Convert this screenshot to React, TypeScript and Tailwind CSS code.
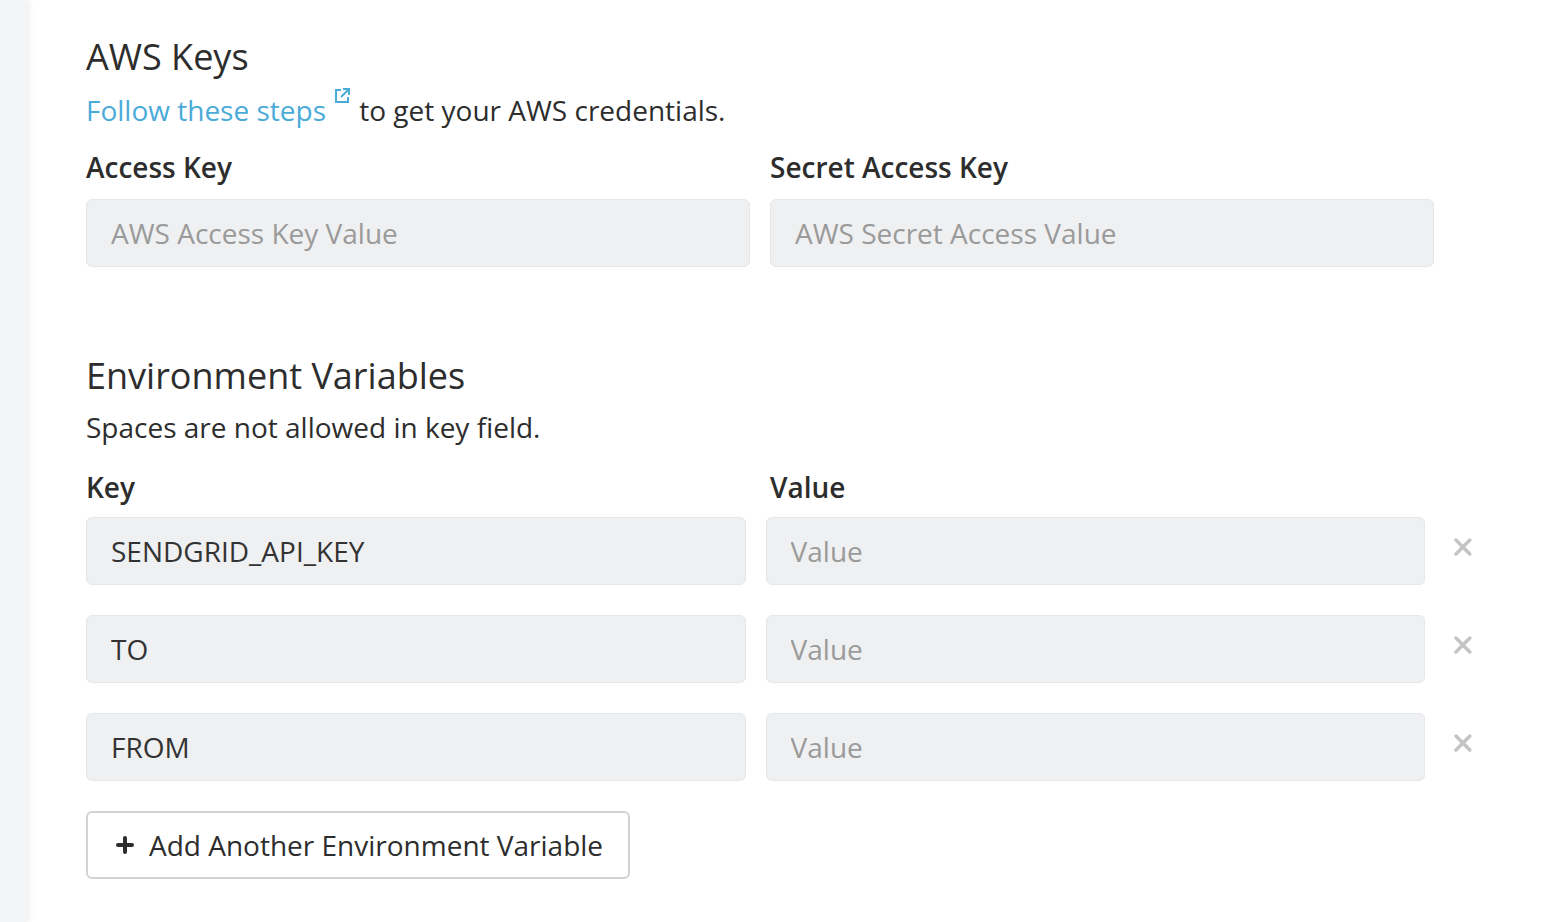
import { Plus, X } from 'lucide-react';

const rows = ['SENDGRID_API_KEY', 'TO', 'FROM'];

function ExtIcon() {
  return (
    <svg width="20" height="20" viewBox="0 0 20 20" fill="none" stroke="#4aabd8" strokeWidth="2" className="inline-block align-top -mt-1 ml-1.5">
      <path d="M9 4H4v12h12v-5" />
      <path d="M11 3h6v6M17 3l-8 8" />
    </svg>
  );
}

export default function App() {
  return (
    <div className="flex min-h-[922px] bg-white text-[#2d2d2d]" style={{ fontFamily: '"Open Sans", sans-serif' }}>
      <div className="w-[27px] shrink-0 bg-[#f4f5f7] shadow-[2px_0_6px_rgba(0,0,0,0.08)]" />
      <div className="pl-[59px] pt-[30px] w-[1450px]">
        {/* AWS keys */}
        <h2 className="text-[36px] leading-[54px]">AWS Keys</h2>
        <p className="text-[28px] leading-[40px] mt-[6px]">
          <span className="text-[#4aabd8]">Follow these steps</span>
          <ExtIcon /> to get your AWS credentials.
        </p>
        <div className="grid grid-cols-[664px_664px] gap-x-5 mt-[17px]">
          <label className="text-[28px] font-semibold leading-[40px]">Access Key</label>
          <label className="text-[28px] font-semibold leading-[40px]">Secret Access Key</label>
          <input placeholder="AWS Access Key Value" className="mt-[12px] h-[68px] rounded-md bg-[#eff0f1] border border-[#e6e7e9] px-6 text-[28px] placeholder:text-[#9a9a9a] outline-none" />
          <input placeholder="AWS Secret Access Value" className="mt-[12px] h-[68px] rounded-md bg-[#eff0f1] border border-[#e6e7e9] px-6 text-[28px] placeholder:text-[#9a9a9a] outline-none" />
        </div>

        {/* Environment variables */}
        <h2 className="text-[36px] leading-[54px] mt-[82px]">Environment Variables</h2>
        <p className="text-[28px] leading-[40px] mt-[4px]">Spaces are not allowed in key field.</p>
        <div className="grid grid-cols-[664px_664px] gap-x-5 mt-[20px]">
          <label className="text-[28px] font-semibold leading-[40px]">Key</label>
          <label className="text-[28px] font-semibold leading-[40px]">Value</label>
        </div>
        <div className="flex flex-col gap-[30px] mt-[10px]">
          {rows.map((k) => (
            <div key={k} className="flex items-center gap-5">
              <input defaultValue={k} className="w-[664px] h-[68px] rounded-md bg-[#eff0f1] border border-[#e6e7e9] px-6 text-[28px] text-[#333] outline-none" />
              <input placeholder="Value" className="w-[664px] h-[68px] rounded-md bg-[#eff0f1] border border-[#e6e7e9] px-6 text-[28px] placeholder:text-[#9a9a9a] outline-none" />
              <X className="w-7 h-7 ml-1 text-[#c4c4c4] -mt-[8px]" strokeWidth={3} />
            </div>
          ))}
        </div>
        <button className="mt-[30px] h-[68px] w-[544px] flex items-center justify-center gap-3 rounded-md border-2 border-[#d2d2d2] bg-white text-[28px] text-[#2d2d2d]">
          <Plus className="w-6 h-6" strokeWidth={4} />
          Add Another Environment Variable
        </button>
      </div>
    </div>
  );
}
